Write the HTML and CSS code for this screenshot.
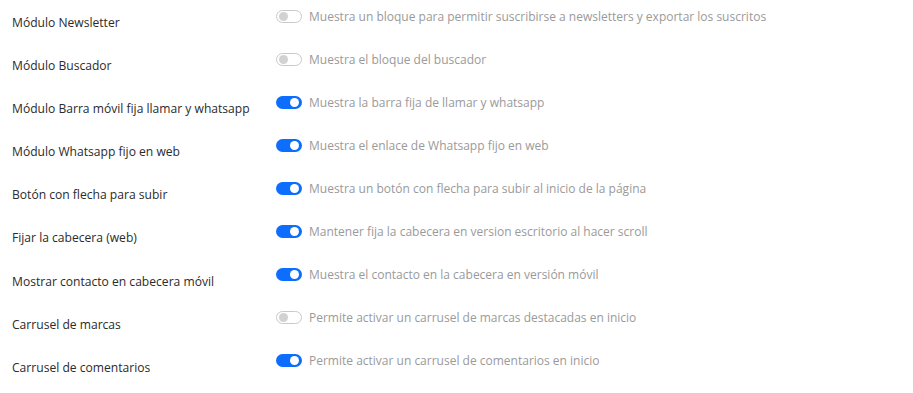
FILE: index.html
```html
<!DOCTYPE html>
<html lang="es">
<head>
<meta charset="utf-8">
<link rel="stylesheet" href="styles.css">
</head>
<body>
<div class="settings">
  <div class="row">
    <div class="label">Módulo Newsletter</div>
    <div class="field"><span class="switch off"></span><span class="desc">Muestra un bloque para permitir suscribirse a newsletters y exportar los suscritos</span></div>
  </div>
  <div class="row">
    <div class="label">Módulo Buscador</div>
    <div class="field"><span class="switch off"></span><span class="desc">Muestra el bloque del buscador</span></div>
  </div>
  <div class="row">
    <div class="label">Módulo Barra móvil fija llamar y whatsapp</div>
    <div class="field"><span class="switch on"></span><span class="desc">Muestra la barra fija de llamar y whatsapp</span></div>
  </div>
  <div class="row">
    <div class="label">Módulo Whatsapp fijo en web</div>
    <div class="field"><span class="switch on"></span><span class="desc">Muestra el enlace de Whatsapp fijo en web</span></div>
  </div>
  <div class="row">
    <div class="label">Botón con flecha para subir</div>
    <div class="field"><span class="switch on"></span><span class="desc">Muestra un botón con flecha para subir al inicio de la página</span></div>
  </div>
  <div class="row">
    <div class="label">Fijar la cabecera (web)</div>
    <div class="field"><span class="switch on"></span><span class="desc">Mantener fija la cabecera en version escritorio al hacer scroll</span></div>
  </div>
  <div class="row">
    <div class="label">Mostrar contacto en cabecera móvil</div>
    <div class="field"><span class="switch on"></span><span class="desc">Muestra el contacto en la cabecera en versión móvil</span></div>
  </div>
  <div class="row">
    <div class="label">Carrusel de marcas</div>
    <div class="field"><span class="switch off"></span><span class="desc">Permite activar un carrusel de marcas destacadas en inicio</span></div>
  </div>
  <div class="row">
    <div class="label">Carrusel de comentarios</div>
    <div class="field"><span class="switch on"></span><span class="desc">Permite activar un carrusel de comentarios en inicio</span></div>
  </div>
</div>
</body>
</html>
```
FILE: styles.css
```css
html, body {
  margin: 0;
  padding: 0;
  background: #fff;
}
body {
  font-family: "Open Sans", "Noto Sans", sans-serif;
  font-size: 12.1px;
  color: #333;
}
.settings {
  padding-left: 12px;
}
.row {
  display: grid;
  grid-template-columns: 264px auto;
  height: 43.1px;
}
.label {
  padding-top: 13px;
  line-height: 20px;
  color: #2b2b2b;
}
.field {
  display: flex;
  align-items: center;
  height: 18px;
  padding-top: 7px;
}
.switch {
  position: relative;
  box-sizing: border-box;
  width: 26px;
  height: 13px;
  border-radius: 7px;
  flex: none;
  margin-right: 7px;
}
.switch::after {
  content: "";
  position: absolute;
  width: 9px;
  height: 9px;
  border-radius: 50%;
}
.switch.off {
  border: 1px solid #c9c9c9;
  background: #fff;
}
.switch.off::after {
  top: 1px;
  left: 2px;
  background: #d2d2d2;
}
.switch.on {
  background: #0d6efd;
}
.switch.on::after {
  top: 2px;
  right: 3px;
  background: #fff;
}
.desc {
  color: #9a9a9a;
  font-size: 12px;
  white-space: nowrap;
}
```
